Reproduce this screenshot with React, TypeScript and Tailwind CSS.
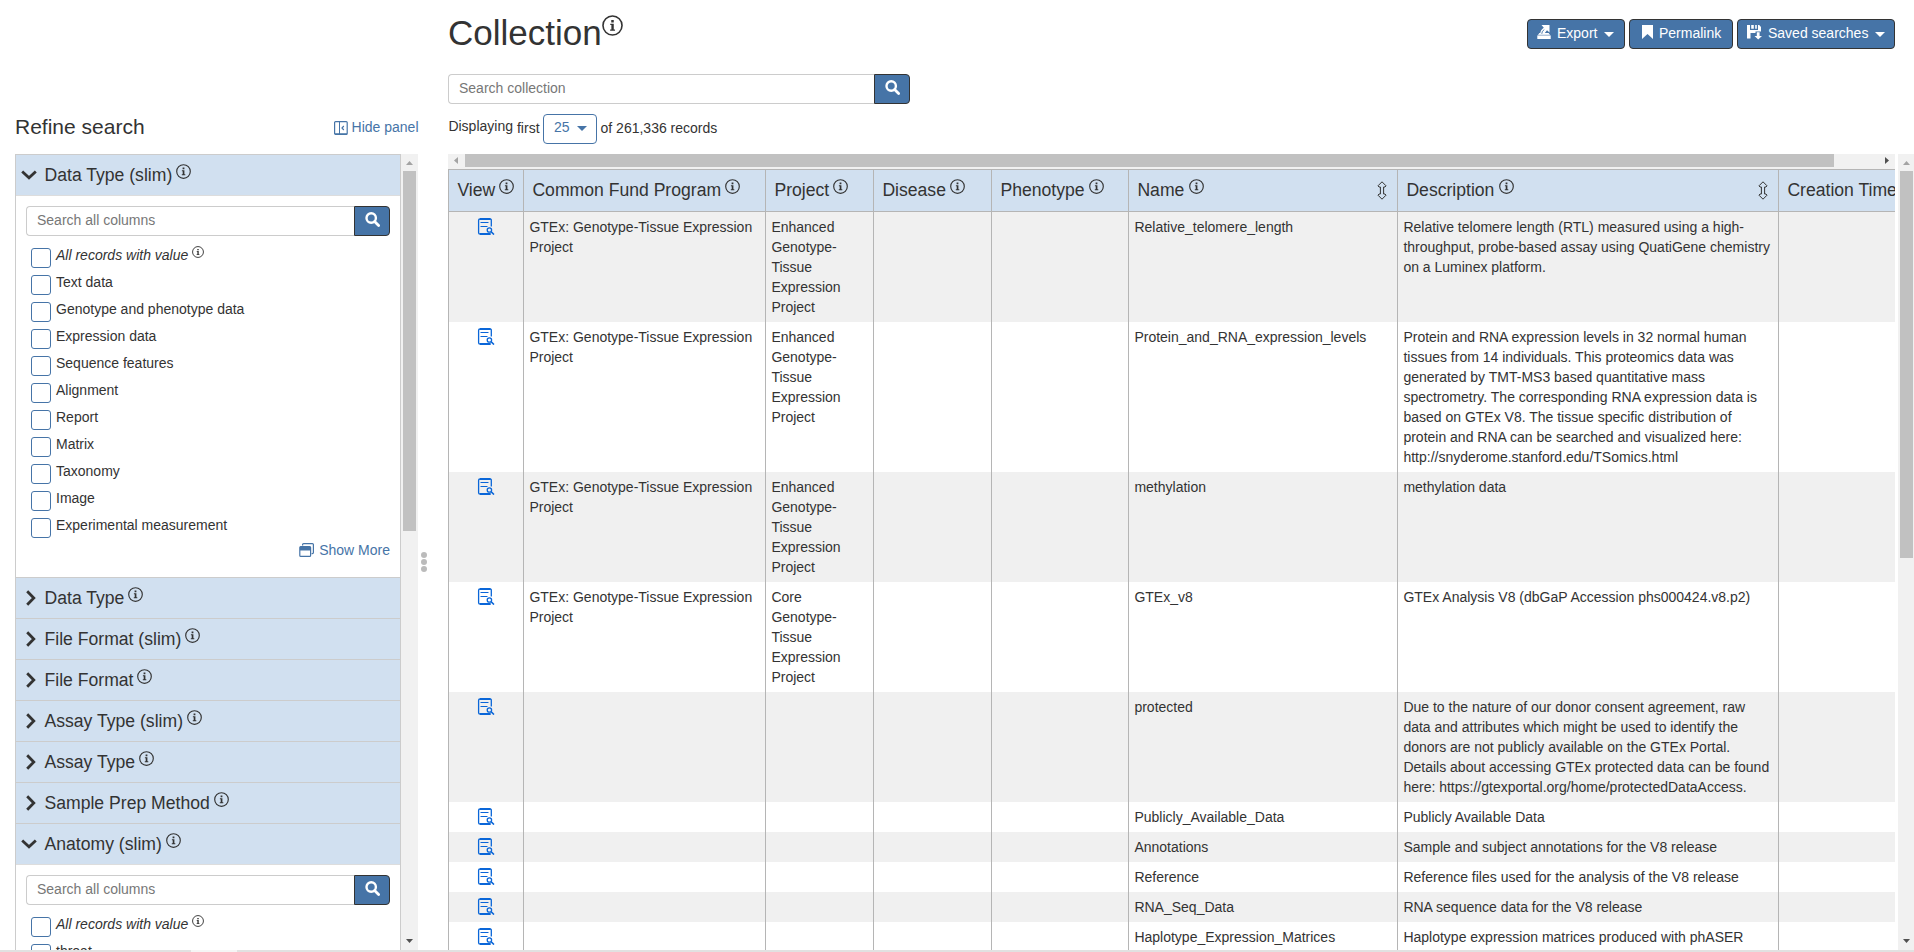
import React from "react";

type SvgProps = { className?: string };

const InfoIcon = ({ className = "" }: SvgProps) => (
  <svg viewBox="0 0 15 15" className={className} fill="none">
    <circle cx="7.5" cy="7.5" r="6.8" stroke="#333" strokeWidth="1.15" />
    <path d="M6.6 3.6h1.8v1.7H6.6zM5.9 6.3h2.5v4h.9v.9H5.8v-.9h.9V7.2h-.8z" fill="#333" />
  </svg>
);

const SearchIcon = () => (
  <svg viewBox="0 0 15 15" className="mb-[4px] h-[15px] w-[15px]" fill="none" stroke="#fff">
    <circle cx="6.2" cy="6" r="4.7" strokeWidth="2.4" />
    <path d="M9.6 9.5l4 3.9" strokeWidth="2.8" strokeLinecap="round" />
  </svg>
);

const Chevron = ({ open }: { open: boolean }) =>
  open ? (
    <svg viewBox="0 0 16 10" className="mt-[15px] ml-[5px] h-[10px] w-[16px] shrink-0" fill="none" stroke="#333" strokeWidth="2.8">
      <path d="M1.200 1.500L8 7.800l6.800-6.300" />
    </svg>
  ) : (
    <svg viewBox="0 0 10 16" className="mt-[12px] mr-[1px] ml-[10px] h-[16px] w-[10px] shrink-0" fill="none" stroke="#333" strokeWidth="2.8">
      <path d="M1.200 1.200L7.800 8 1.200 14.800" />
    </svg>
  );

const Caret = ({ className = "" }: SvgProps) => (
  <svg viewBox="0 0 10 5" className={`h-[5px] w-[10px] ${className}`} fill="currentColor">
    <path d="M0 0h10L5 5z" />
  </svg>
);

const SortIcon = () => (
  <svg viewBox="0 0 10 19" className="h-[19px] w-[10px]" fill="none" stroke="#333" strokeWidth="1">
    <path d="M5 .8L9 4.800 8 6H6.600v7H8l1 1.200L5 18.200 1 14.200 2 13h1.400V6H2L1 4.800z" />
  </svg>
);

const ViewIcon = () => (
  <svg viewBox="0 0 18 17" className="h-[17px] w-[18px]" fill="none" stroke="#0a66d8">
    <path d="M14.300 8.500V2.200Q14.300 1 13 1H3Q1.600 1 1.600 2.300V14.700Q1.600 16 3 16h10.500" strokeWidth="1.300" />
    <path d="M3 1h10.500M3 16h10.500" strokeWidth="1.900" />
    <path d="M3.500 4.500h8M3.500 8.500h7" strokeWidth="1.100" />
    <circle cx="12.400" cy="12" r="2.200" strokeWidth="1.300" />
    <path d="M14 13.600l3 3" strokeWidth="1.500" />
  </svg>
);

const HidePanelIcon = () => (
  <svg viewBox="0 0 14 14" className="h-[14px] w-[14px]" fill="none" stroke="#4674a7">
    <rect x=".6" y=".6" width="12.600" height="12.800" rx="1" strokeWidth="1.200" />
    <path d="M5.500 1v12" strokeWidth="1" />
    <path d="M1 13h12" strokeWidth="1.400" />
    <path d="M9.800 5L8 7l1.800 2" strokeWidth="1.200" />
  </svg>
);

const WindowsIcon = () => (
  <svg viewBox="0 0 15 14" className="h-[14px] w-[15px]" fill="none" stroke="#4674a7" strokeWidth="1.200">
    <path d="M3.600 2.500V1.600q0-1 1-1h8.800q1 0 1 1v8q0 1-1 1h-.8" />
    <rect x=".8" y="3.600" width="10.800" height="9.800" rx="1" />
    <path d="M1 3.500h10.400v4H1z" fill="#4674a7" stroke="none" />
  </svg>
);

const ExportIcon = () => (
  <svg viewBox="0 0 14 14" className="h-[14px] w-[14px]" fill="#fff">
    <path d="M.3 10.200h13.400V14H.3zM2.400 8h9.200l1.700 2.200H.7z" />
    <path d="M.3 10.200h13.400" stroke="#4674a7" strokeWidth=".6" />
    <path d="M4.500 0h8v7.500L10 5.300 7.400 8.500H3.200Q3.400 5 6.800 2.700z" />
    <path d="M4.800 8.800Q4.700 6 7.300 4.600" fill="none" stroke="#4674a7" strokeWidth=".9" />
  </svg>
);

const BookmarkIcon = () => (
  <svg viewBox="0 0 11 14" className="h-[14px] w-[11px]" fill="#fff">
    <path d="M0 0h11v14L5.500 9 0 14z" />
  </svg>
);

const SaveIcon = () => (
  <svg viewBox="0 0 15 15" className="h-[15px] w-[15px]" fill="#fff">
    <path d="M0 0h3v5h8V0h1.200L14 2v4.500H8.500V8H3.500v5.500H0zM4.200 0h2.600v3.800H4.200zM8.200 0h1.600v3.800H8.200zM9.800 7.200h2.800V11H15l-3.800 3.500L7.500 11h2.300z" />
  </svg>
);

const SearchBox = ({ placeholder }: { placeholder: string }) => (
  <div className="flex h-[30px]">
    <div className="flex-1 rounded-l-[4px] border border-r-0 border-[#ccc] pl-[10px] leading-[26px] text-[#777]">{placeholder}</div>
    <button className="flex w-[36px] items-center justify-center rounded-r-[4px] border border-[#333] bg-[#4674a7]">
      <SearchIcon />
    </button>
  </div>
);

const options = [
  "Text data",
  "Genotype and phenotype data",
  "Expression data",
  "Sequence features",
  "Alignment",
  "Report",
  "Matrix",
  "Taxonomy",
  "Image",
  "Experimental measurement",
];

const Option = ({ label, all = false }: { label: string; all?: boolean }) => (
  <li className="flex h-[27px] items-start leading-[20px]">
    <span className="mt-[3px] mr-[5px] h-[20px] w-[20px] shrink-0 rounded-[3px] border border-[#4674a7]" />
    {all ? (
      <>
        <i>{label}</i>
        <InfoIcon className="mt-[1px] ml-[4px] h-[12px] w-[12px]" />
      </>
    ) : (
      <span>{label}</span>
    )}
  </li>
);

const Facet = ({ title, items }: { title: string; items?: string[] }) => (
  <section className="shrink-0 border-b border-[#ccc]">
    <h3 className={`flex bg-[#d1e0f0] text-[17.600px] leading-[24px] ${items ? "h-[41px] border-b border-[#ddd]" : "h-[40px]"}`}>
      <Chevron open={!!items} />
      <span className="mt-[8px] ml-[7.500px]">{title}</span>
      <InfoIcon className="mt-[9px] ml-[4px] h-[15px] w-[15px]" />
    </h3>
    {items && (
      <div className="h-[381px] px-[10px] pt-[10px]">
        <SearchBox placeholder="Search all columns" />
        <ul className="mt-[9px] h-[295px] pl-[5px]">
          <Option label="All records with value" all />
          {items.map((o) => (
            <Option key={o} label={o} />
          ))}
        </ul>
        <div className="flex justify-end gap-[5px] leading-[20px] text-[#4674a7]">
          <span className="mt-[3px]">
            <WindowsIcon />
          </span>
          <span>Show More</span>
        </div>
      </div>
    )}
  </section>
);

const Sidebar = () => (
  <aside className="flex h-full w-[418px] shrink-0 flex-col pl-[15px]">
    <div className="flex h-[154px] shrink-0 items-end justify-between">
      <h2 className="mb-[15px] text-[21px] leading-[24px]">Refine search</h2>
      <div className="mb-[17px] flex gap-[4px] leading-[20px] text-[#4674a7]">
        <span className="mt-[4px]">
          <HidePanelIcon />
        </span>
        <span className="-mr-[0.500px]">Hide panel</span>
      </div>
    </div>
    <div className="flex min-h-0 flex-1">
      <div className="flex w-[386px] flex-col overflow-hidden border border-b-0 border-[#ccc]">
        <Facet title="Data Type (slim)" items={options} />
        <Facet title="Data Type" />
        <Facet title="File Format (slim)" />
        <Facet title="File Format" />
        <Facet title="Assay Type (slim)" />
        <Facet title="Assay Type" />
        <Facet title="Sample Prep Method" />
        <Facet title="Anatomy (slim)" items={["throat"]} />
      </div>
      <VerticalScroll className="w-[17px]" thumb="h-[360px]" />
    </div>
  </aside>
);

const VerticalScroll = ({ className, thumb }: { className: string; thumb: string }) => (
  <div className={`flex shrink-0 flex-col items-center bg-[#f1f1f1] ${className}`}>
    <svg viewBox="0 0 7 4" className="mt-[7px] mb-[6px] h-[4px] w-[7px] shrink-0" fill="#a3a3a3">
      <path d="M0 4L3.500 0 7 4z" />
    </svg>
    <div className={`w-[13px] bg-[#c1c1c1] ${thumb}`} />
    <svg viewBox="0 0 7 4" className="mt-auto mb-[7px] h-[4px] w-[7px] shrink-0" fill="#505050">
      <path d="M0 0h7L3.500 4z" />
    </svg>
  </div>
);

const columns = [
  { title: "View", w: "w-[75px]" },
  { title: "Common Fund Program", w: "w-[242px]" },
  { title: "Project", w: "w-[108px]" },
  { title: "Disease", w: "w-[118px]" },
  { title: "Phenotype", w: "w-[137px]" },
  { title: "Name", w: "w-[269px]", sort: true },
  { title: "Description", w: "w-[381px]", sort: true },
  { title: "Creation Time", w: "w-[160px]" },
];

const gtex = "GTEx: Genotype-Tissue Expression Project";
const enhanced = "Enhanced Genotype-Tissue Expression Project";

const rows = [
  [gtex, enhanced, "Relative_telomere_length", "Relative telomere length (RTL) measured using a high-throughput, probe-based assay using QuatiGene chemistry on a Luminex platform."],
  [gtex, enhanced, "Protein_and_RNA_expression_levels", "Protein and RNA expression levels in 32 normal human tissues from 14 individuals. This proteomics data was generated by TMT-MS3 based quantitative mass spectrometry. The corresponding RNA expression data is based on GTEx V8. The tissue specific distribution of protein and RNA can be searched and visualized here: http://snyderome.stanford.edu/TSomics.html"],
  [gtex, enhanced, "methylation", "methylation data"],
  [gtex, "Core Genotype-Tissue Expression Project", "GTEx_v8", "GTEx Analysis V8 (dbGaP Accession phs000424.v8.p2)"],
  ["", "", "protected", "Due to the nature of our donor consent agreement, raw data and attributes which might be used to identify the donors are not publicly available on the GTEx Portal. Details about accessing GTEx protected data can be found here: https://gtexportal.org/home/protectedDataAccess."],
  ["", "", "Publicly_Available_Data", "Publicly Available Data"],
  ["", "", "Annotations", "Sample and subject annotations for the V8 release"],
  ["", "", "Reference", "Reference files used for the analysis of the V8 release"],
  ["", "", "RNA_Seq_Data", "RNA sequence data for the V8 release"],
  ["", "", "Haplotype_Expression_Matrices", "Haplotype expression matrices produced with phASER"],
];

const Table = () => (
  <div className="min-h-0 flex-1 overflow-hidden border-l border-[#b5b5b5]">
    <div className="w-[1490px]">
      <div className="flex h-[43px] border-y border-[#b5b5b5] bg-[#d1e0f0] text-[17.600px] leading-[24px]">
        {columns.map((c) => (
          <div key={c.title} className={`flex shrink-0 border-r border-[#b5b5b5] pt-[8px] pl-[8.400px] whitespace-nowrap ${c.w}`}>
            <span>{c.title}</span>
            <InfoIcon className="mt-px ml-[4.200px] h-[15px] w-[15px] shrink-0" />
            {c.sort && (
              <span className="mt-[3px] mr-[10px] ml-auto">
                <SortIcon />
              </span>
            )}
          </div>
        ))}
      </div>
      {rows.map(([program, project, name, desc]) => (
        <div key={name} className="flex leading-[20px] odd:bg-white even:bg-[#f0f0f0]">
          {["view", program, project, "", "", name, desc, ""].map((cell, i) => (
            <div key={i} className={`shrink-0 border-r border-[#b5b5b5] py-[5px] pr-[5px] pl-[5.400px] ${columns[i].w}`}>
              {i === 0 ? (
                <span className="mt-px ml-[22.600px] block">
                  <ViewIcon />
                </span>
              ) : (
                cell
              )}
            </div>
          ))}
        </div>
      ))}
    </div>
  </div>
);

const ActionButton = ({ icon, label, caret, className }: { icon: React.ReactNode; label: string; caret?: boolean; className: string }) => (
  <button className={`flex h-[30px] items-start gap-[6px] rounded-[4px] border border-[#333] bg-[#4674a7] pt-[3px] leading-[20px] text-white ${className}`}>
    <span className="mt-[2px]">{icon}</span>
    <span>{label}</span>
    {caret && <Caret className="mt-[9px] ml-px" />}
  </button>
);

const Toolbar = () => (
  <div className="h-[154px] shrink-0">
    <div className="flex h-[74px] justify-between">
      <h1 className="mt-[13px] flex text-[35px] leading-[40px]">
        Collection
        <InfoIcon className="mt-[2px] h-[21px] w-[21px]" />
      </h1>
      <div className="mt-[19px] flex gap-[4px]">
        <ActionButton icon={<ExportIcon />} label="Export" caret className="w-[98px] pl-[9px]" />
        <ActionButton icon={<BookmarkIcon />} label="Permalink" className="w-[104px] pl-[12px]" />
        <ActionButton icon={<SaveIcon />} label="Saved searches" caret className="w-[158px] pl-[9px]" />
      </div>
    </div>
    <div className="w-[462px]">
      <SearchBox placeholder="Search collection" />
    </div>
    <div className="mt-[10px] flex leading-[20px]">
      <span className="mt-[2px] ml-[0.400px]">Displaying</span>
      <span className="mt-[4px] ml-[4px]">first</span>
      <span className="ml-[3.500px] flex h-[30px] w-[54px] rounded-[4px] border border-[#4674a7] pt-[2px] pl-[10px] text-[#4674a7]">
        25
        <Caret className="mt-[9px] ml-[7px]" />
      </span>
      <span className="mt-[4px] ml-[3.500px]">of 261,336 records</span>
    </div>
  </div>
);

const HorizontalScroll = () => (
  <div className="flex h-[15px] shrink-0 items-start bg-[#f1f1f1]">
    <svg viewBox="0 0 4 7" className="mt-[3px] mr-[7px] ml-[6px] h-[7px] w-[4px]" fill="#a3a3a3">
      <path d="M4 0v7L0 3.500z" />
    </svg>
    <div className="h-[13px] w-[1369px] bg-[#c1c1c1]" />
    <svg viewBox="0 0 4 7" className="mt-[3px] mr-[6px] ml-auto h-[7px] w-[4px]" fill="#505050">
      <path d="M0 0v7l4-3.500z" />
    </svg>
  </div>
);

export default function App() {
  return (
    <div className="flex h-[952px] w-[1914px] flex-col overflow-hidden bg-white font-['Liberation_Sans',Arial,sans-serif] text-[14px] text-[#333]">
      <div className="flex h-[950px] shrink-0">
        <Sidebar />
        <div className="flex w-[30px] shrink-0 flex-col gap-px pt-[552px] pl-[3px]">
          <span className="h-[6px] w-[6px] rounded-full bg-[#bbb]" />
          <span className="h-[6px] w-[6px] rounded-full bg-[#bbb]" />
          <span className="h-[6px] w-[6px] rounded-full bg-[#bbb]" />
        </div>
        <main className="flex w-[1447px] shrink-0 flex-col">
          <Toolbar />
          <HorizontalScroll />
          <Table />
        </main>
        <div className="flex flex-1 flex-col pt-[154px] pl-[3px]">
          <VerticalScroll className="flex-1" thumb="h-[387px]" />
        </div>
      </div>
      <div className="flex h-[2px] bg-[#e1e1e1]">
        <div className="ml-[191px] h-full w-[48px] border-r-2 border-[#e1e1e1] bg-[#f5f5f5]" />
      </div>
    </div>
  );
}
